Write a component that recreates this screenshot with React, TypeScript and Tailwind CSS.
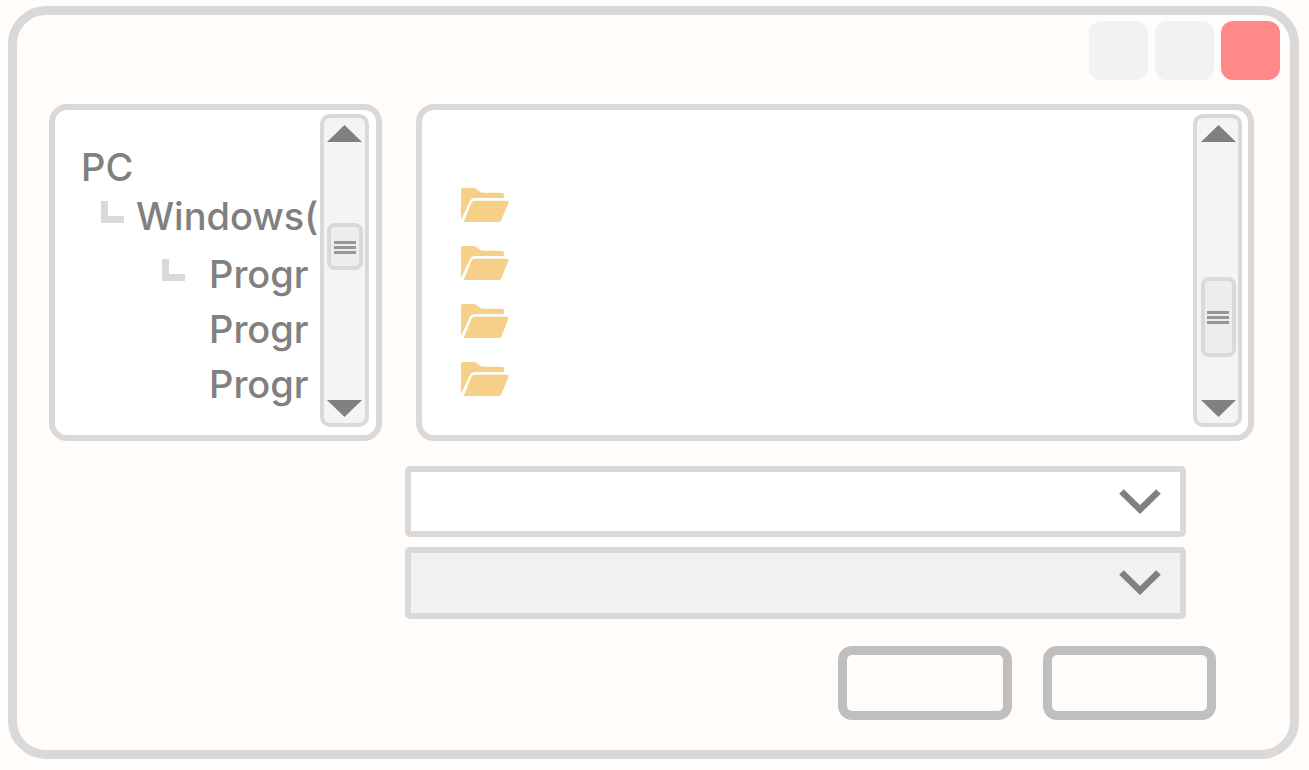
import React from "react";
import clsx from "clsx";

interface ScrollBarProps {
  label: string;
  thumbClass: string;
  className?: string;
}

const ScrollBar: React.FC<ScrollBarProps> = ({ label, thumbClass, className }) => {
  return (
    <div
      className={clsx(
        "flex w-[49px] shrink-0 flex-col items-center rounded-[10px] border-4 border-[#d9d9d9] bg-[#f4f4f4] pt-[7px] pb-[6px]",
        className
      )}
    >
      <button type="button" aria-label={`Scroll ${label} up`}>
        <svg width="35" height="17" viewBox="0 0 35 17" className="block">
          <path d="M17.5 0L35 17H0Z" fill="#808080" />
        </svg>
      </button>
      <div
        className={clsx(
          "flex flex-col items-center justify-center gap-[2px] rounded-[8px] border-4 border-[#d9d9d9] bg-[#ededed] pt-px",
          thumbClass
        )}
      >
        <span className="h-[3px] w-[22px] bg-[#969896]" />
        <span className="h-[3px] w-[22px] bg-[#969896]" />
        <span className="h-[3px] w-[22px] bg-[#969896]" />
      </div>
      <button type="button" aria-label={`Scroll ${label} down`} className="mt-auto">
        <svg width="35" height="17" viewBox="0 0 35 17" className="block">
          <path d="M0 0H35L17.5 17Z" fill="#808080" />
        </svg>
      </button>
    </div>
  );
};

const Branch: React.FC = () => (
  <span className="mb-[10px] h-[22px] w-[23px] shrink-0 rounded-bl-[2px] border-b-[7px] border-l-[7px] border-[#d9d9d9]" />
);

const FolderIcon: React.FC = () => (
  <svg width="48" height="34" viewBox="0 0 144 102" fill="#f6d088" className="block">
    <path d="M0 96V6Q0 0 6 0H38C50 0 53 14 67 14H123Q129 14 129 20V30H41Q31 30 27 38Z" />
    <path d="M8 102L31 45Q34 38 41 38H138Q144 38 142 45L121 97Q119 102 113 102Z" />
  </svg>
);

interface ComboBoxProps {
  label: string;
  className: string;
}

const ComboBox: React.FC<ComboBoxProps> = ({ label, className }) => {
  return (
    <div className="relative">
      <select
        aria-label={label}
        className={clsx(
          "block w-full appearance-none rounded-[5px] border-[6px] border-[#d9d9d9] px-4 outline-none",
          className
        )}
      />
      <svg
        width="42"
        height="25"
        viewBox="0 0 42 25"
        className="pointer-events-none absolute top-[23px] right-[25px]"
      >
        <path d="M2.5 2.5L21 20.5L39.5 2.5" fill="none" stroke="#808080" strokeWidth="6.5" />
      </svg>
    </div>
  );
};

const folders = ["Folder 1", "Folder 2", "Folder 3", "Folder 4"];

const App: React.FC = () => {
  return (
    <div className="min-h-screen bg-[#fffcf9] pt-[6px] pr-[10px] pb-[11px] pl-2 font-['Inter',sans-serif]">
      <main className="rounded-[38px] border-[9px] border-[#d9d9d9] pb-[30px]">
        <header className="flex justify-end gap-[7px] pt-[6px] pr-[10px]">
          <button type="button" aria-label="Minimize" className="size-[59px] rounded-xl bg-[#f2f2f2]" />
          <button type="button" aria-label="Maximize" className="size-[59px] rounded-xl bg-[#f2f2f2]" />
          <button type="button" aria-label="Close" className="size-[59px] rounded-xl bg-[#ff8888]" />
        </header>

        <div className="mt-6 flex h-[337px] gap-[34px] pr-9 pl-8">
          <nav
            aria-label="Folders"
            className="flex w-[333px] shrink-0 rounded-[18px] border-[6px] border-[#d9d9d9] bg-white pt-1 pr-[7px] pb-2"
          >
            <ul className="min-w-0 flex-1 overflow-hidden pt-[29px] text-[38px] font-medium whitespace-nowrap text-[#808080]">
              <li className="flex h-[49px] items-center pl-[26px]">PC</li>
              <li className="mb-[6px] flex h-[49px] items-center gap-3 pl-[46px]">
                <Branch />
                Windows(
              </li>
              <li className="flex h-[55px] items-center gap-6 pl-[107px]">
                <Branch />
                Progr
              </li>
              <li className="flex h-[55px] items-center pl-[154px]">Progr</li>
              <li className="flex h-[55px] items-center pl-[154px]">Progr</li>
            </ul>
            <ScrollBar label="folders" thumbClass="mt-[81px] h-[47px] w-9" />
          </nav>

          <section
            aria-label="Files"
            className="flex min-w-0 flex-1 rounded-[18px] border-[6px] border-[#d9d9d9] bg-white pt-1 pr-[6px] pb-2"
          >
            <ul className="flex min-w-0 flex-1 flex-col gap-6 pt-[74px] pl-[39px]">
              {folders.map((name) => (
                <li key={name}>
                  <button type="button" aria-label={name} className="block">
                    <FolderIcon />
                  </button>
                </li>
              ))}
            </ul>
            <ScrollBar label="files" className="pl-px" thumbClass="mt-[135px] h-20 w-[35px]" />
          </section>
        </div>

        <div className="mt-[25px] mr-[104px] ml-[388px] flex flex-col gap-[10px]">
          <ComboBox label="File name" className="h-[71px] bg-white" />
          <ComboBox label="File type" className="h-[72px] bg-[#f1f1f1]" />
        </div>

        <footer className="mt-[27px] flex justify-end gap-[31px] pr-[74px]">
          <button
            type="button"
            aria-label="Open"
            className="h-[74px] w-[174px] rounded-[14px] border-[9px] border-[#bfbfbf]"
          />
          <button
            type="button"
            aria-label="Cancel"
            className="h-[74px] w-[173px] rounded-[14px] border-[9px] border-[#bfbfbf]"
          />
        </footer>
      </main>
    </div>
  );
};

export default App;
